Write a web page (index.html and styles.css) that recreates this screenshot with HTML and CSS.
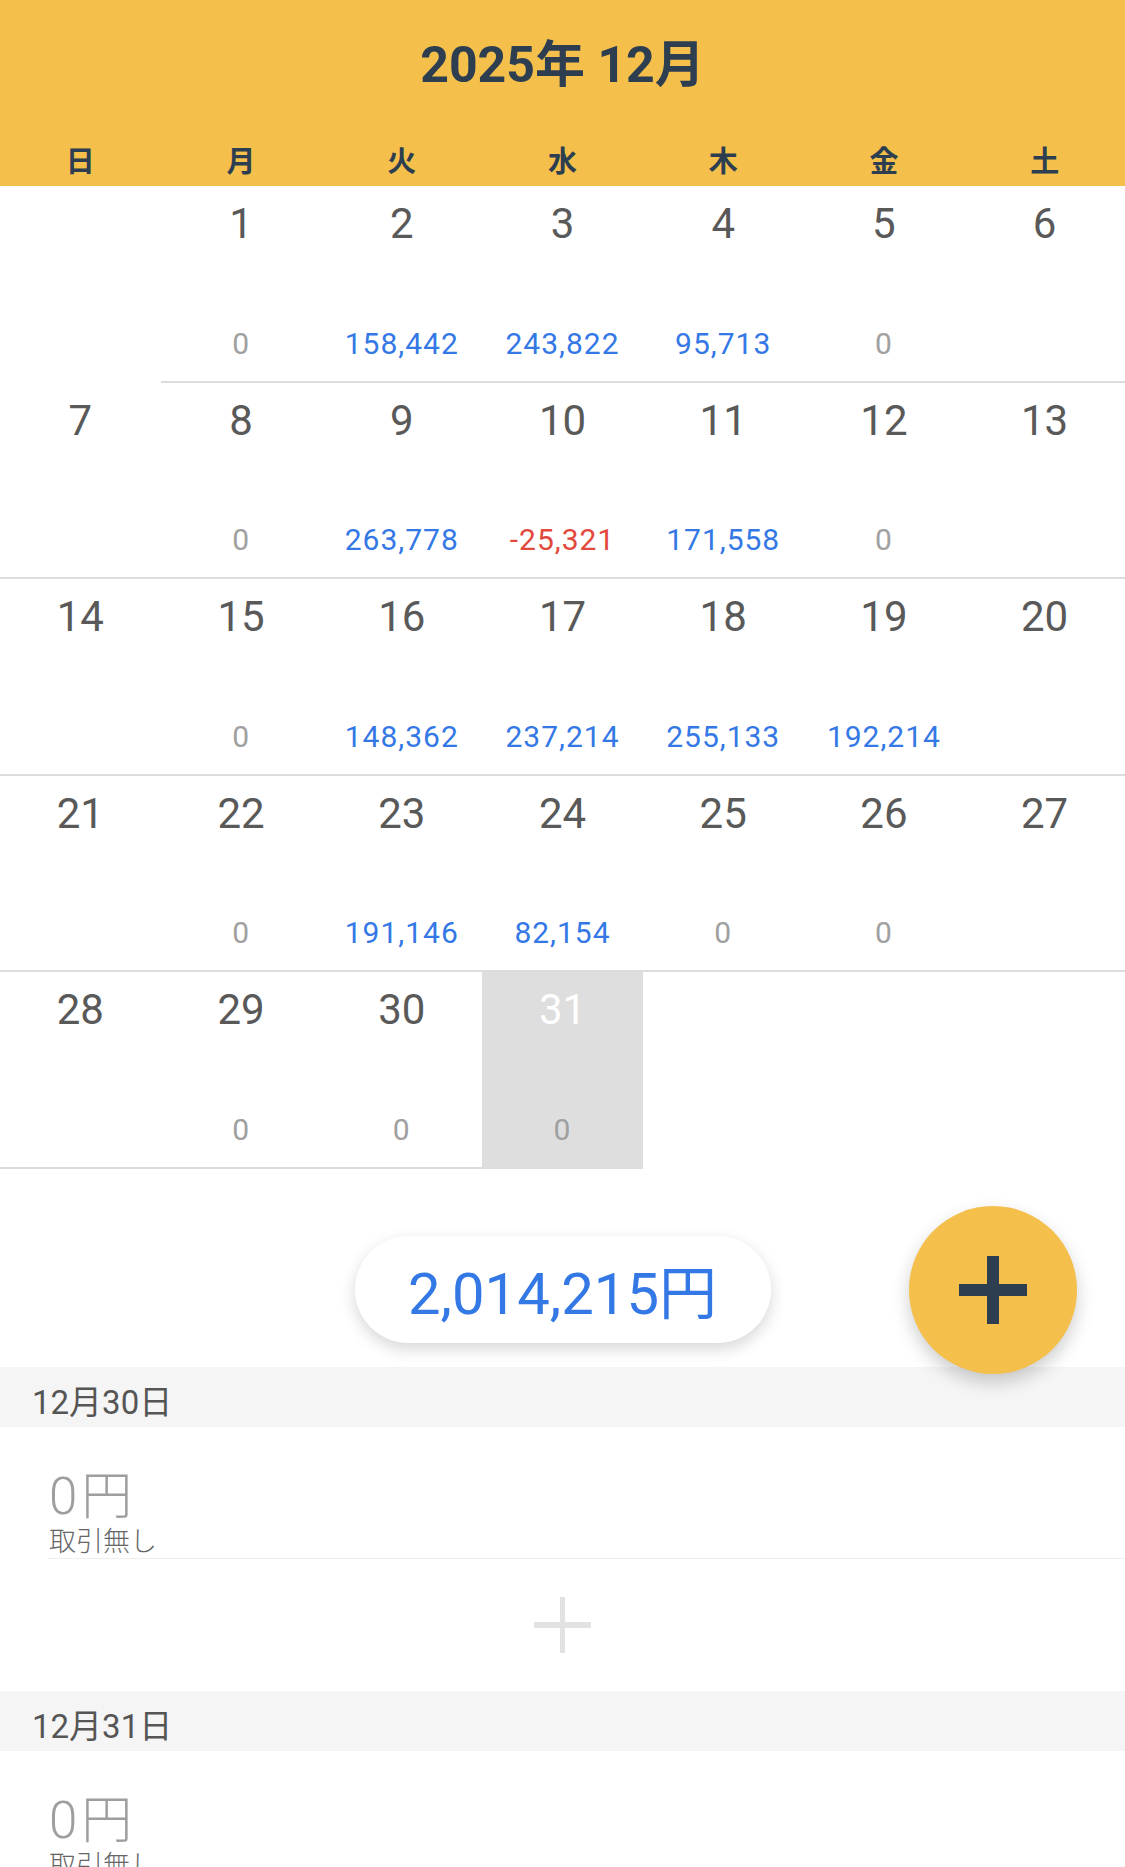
FILE: index.html
```html
<!DOCTYPE html>
<html lang="ja">
<head>
    <meta charset="UTF-8">
    <meta name="viewport" content="width=device-width, initial-scale=1.0">
    <title>カレンダー</title>
    <link rel="stylesheet" href="styles.css">
</head>
<body>
    <div class="app">
        <header class="month-header">
            <h1 class="month-title">2025年 12月</h1>
            <div class="weekdays">
                <span>日</span>
                <span>月</span>
                <span>火</span>
                <span>水</span>
                <span>木</span>
                <span>金</span>
                <span>土</span>
            </div>
        </header>

        <div class="calendar">
            <div class="day blank"></div>
            <div class="day"><span class="day-num">1</span><span class="day-amount zero">0</span></div>
            <div class="day"><span class="day-num">2</span><span class="day-amount plus">158,442</span></div>
            <div class="day"><span class="day-num">3</span><span class="day-amount plus">243,822</span></div>
            <div class="day"><span class="day-num">4</span><span class="day-amount plus">95,713</span></div>
            <div class="day"><span class="day-num">5</span><span class="day-amount zero">0</span></div>
            <div class="day"><span class="day-num">6</span></div>

            <div class="day"><span class="day-num">7</span></div>
            <div class="day"><span class="day-num">8</span><span class="day-amount zero">0</span></div>
            <div class="day"><span class="day-num">9</span><span class="day-amount plus">263,778</span></div>
            <div class="day"><span class="day-num">10</span><span class="day-amount minus">-25,321</span></div>
            <div class="day"><span class="day-num">11</span><span class="day-amount plus">171,558</span></div>
            <div class="day"><span class="day-num">12</span><span class="day-amount zero">0</span></div>
            <div class="day"><span class="day-num">13</span></div>

            <div class="day"><span class="day-num">14</span></div>
            <div class="day"><span class="day-num">15</span><span class="day-amount zero">0</span></div>
            <div class="day"><span class="day-num">16</span><span class="day-amount plus">148,362</span></div>
            <div class="day"><span class="day-num">17</span><span class="day-amount plus">237,214</span></div>
            <div class="day"><span class="day-num">18</span><span class="day-amount plus">255,133</span></div>
            <div class="day"><span class="day-num">19</span><span class="day-amount plus">192,214</span></div>
            <div class="day"><span class="day-num">20</span></div>

            <div class="day"><span class="day-num">21</span></div>
            <div class="day"><span class="day-num">22</span><span class="day-amount zero">0</span></div>
            <div class="day"><span class="day-num">23</span><span class="day-amount plus">191,146</span></div>
            <div class="day"><span class="day-num">24</span><span class="day-amount plus">82,154</span></div>
            <div class="day"><span class="day-num">25</span><span class="day-amount zero">0</span></div>
            <div class="day"><span class="day-num">26</span><span class="day-amount zero">0</span></div>
            <div class="day"><span class="day-num">27</span></div>

            <div class="day"><span class="day-num">28</span></div>
            <div class="day"><span class="day-num">29</span><span class="day-amount zero">0</span></div>
            <div class="day"><span class="day-num">30</span><span class="day-amount zero">0</span></div>
            <div class="day selected"><span class="day-num">31</span><span class="day-amount zero">0</span></div>
        </div>

        <div class="summary">
            <div class="total-pill">2,014,215円</div>
            <button class="fab" type="button" aria-label="追加">
                <svg width="68" height="68" viewBox="0 0 68 68">
                    <rect x="28" y="0" width="12" height="68" fill="#2c3e50"/>
                    <rect x="0" y="28" width="68" height="12" fill="#2c3e50"/>
                </svg>
            </button>
        </div>

        <section class="day-list">
            <h2 class="list-date">12月30日</h2>
            <div class="entry">
                <div class="entry-amount">0円</div>
                <div class="entry-note">取引無し</div>
            </div>
            <div class="add-row">
                <svg width="57" height="56" viewBox="0 0 57 56">
                    <rect x="26" y="0" width="5" height="56" fill="#e2e2e2"/>
                    <rect x="0" y="25" width="57" height="6" fill="#e2e2e2"/>
                </svg>
            </div>

            <h2 class="list-date">12月31日</h2>
            <div class="entry">
                <div class="entry-amount">0円</div>
                <div class="entry-note">取引無し</div>
            </div>
        </section>
    </div>
</body>
</html>
```

FILE: styles.css
```css
body, html {
    margin: 0;
    padding: 0;
    font-family: Roboto, "Noto Sans CJK JP", sans-serif;
    background-color: #fff;
}

.app {
    width: 1125px;
    height: 100vh;
    overflow: hidden;
}

/* month header */
.month-header {
    background-color: #f4bf4b;
    height: 186px;
    box-sizing: border-box;
    padding-top: 35px;
    color: #2c3e50;
}

.month-title {
    margin: 0;
    font-size: 50px;
    line-height: 60px;
    font-weight: 700;
    text-align: center;
}

.weekdays {
    display: grid;
    grid-template-columns: repeat(7, 1fr);
    margin-top: 50px;
    font-family: "Noto Sans CJK JP", sans-serif;
    font-size: 29px;
    line-height: 29px;
    font-weight: 700;
    text-align: center;
}

/* calendar grid */
.calendar {
    display: grid;
    grid-template-columns: repeat(7, 1fr);
    grid-auto-rows: 196.5px;
}

.day {
    display: flex;
    flex-direction: column;
    align-items: center;
    box-sizing: border-box;
    padding: 14px 0 20px;
    border-bottom: 2px solid #dcdcdc;
}

.day.blank {
    border-bottom: none;
}

.day.selected {
    background-color: #dedede;
    border-bottom-color: #dedede;
}

.day-num {
    font-size: 42px;
    line-height: 48px;
    font-weight: 400;
    color: #595959;
}

.day.selected .day-num {
    color: #fff;
}

.day-amount {
    margin-top: auto;
    font-size: 30px;
    line-height: 34px;
    letter-spacing: 1px;
}

.day-amount.zero {
    color: #a0a0a0;
}

.day-amount.plus {
    color: #3478e6;
}

.day-amount.minus {
    color: #e2483c;
}

/* total + add button */
.summary {
    position: relative;
    display: flex;
    justify-content: center;
    padding: 67px 0 24px;
}

.total-pill {
    width: 416px;
    height: 107px;
    border-radius: 54px;
    background-color: #fff;
    box-shadow: 0 6px 16px rgba(0,0,0,0.16);
    display: flex;
    align-items: center;
    justify-content: center;
    font-size: 58px;
    color: #3478e6;
}

.fab {
    position: absolute;
    right: 48px;
    top: 37px;
    z-index: 2;
    width: 168px;
    height: 168px;
    border: none;
    border-radius: 50%;
    padding: 0;
    background-color: #f4bf4b;
    box-shadow: 0 8px 18px rgba(0,0,0,0.2);
    display: flex;
    align-items: center;
    justify-content: center;
}

/* daily list */
.list-date {
    margin: 0;
    height: 60px;
    box-sizing: border-box;
    padding: 6px 0 0 32px;
    display: flex;
    align-items: center;
    background-color: #f5f5f5;
    font-size: 33px;
    font-weight: 400;
    color: #555;
}

.entry {
    margin-left: 48px;
    padding: 43px 0 0 1px;
    border-bottom: 1px solid #eee;
}

.entry-amount {
    font-size: 51px;
    line-height: 54px;
    font-weight: 300;
    letter-spacing: 4px;
    color: #9e9e9e;
}

.entry-note {
    margin-top: 2px;
    font-size: 27px;
    line-height: 32px;
    font-weight: 300;
    color: #666;
}

.add-row {
    height: 132px;
    display: flex;
    align-items: center;
    justify-content: center;
}
```
